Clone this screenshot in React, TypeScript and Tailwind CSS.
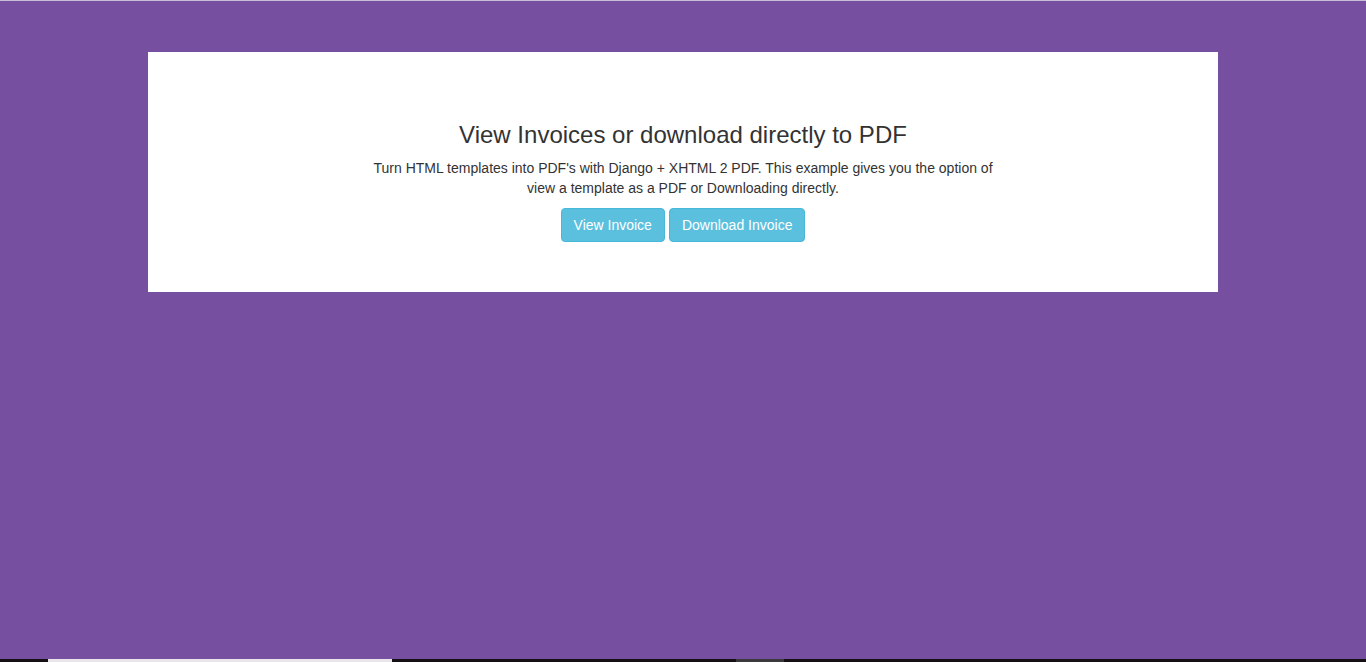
const App = () => {
  return (
    <div className="relative h-[662px] w-full overflow-hidden bg-[#774fa0] font-['Liberation_Sans',Arial,sans-serif] text-[#333]">
      <div className="h-px w-full bg-[#c9bcd9]" />

      <div className="mx-[148px] mt-[51px] bg-white pt-[68px] pb-[50px] text-center">
        <h1 className="text-[24px] leading-[30px] text-[#333]">View Invoices or download directly to PDF</h1>
        <p className="mx-auto mt-[8px] w-[630px] text-[14px] leading-[20px]">
          Turn HTML templates into PDF's with Django + XHTML 2 PDF. This example gives you the option of view a template as a PDF or Downloading directly.
        </p>
        <div className="mt-[10px] flex justify-center gap-[4px]">
          <button className="h-[34px] rounded-[4px] border border-[#46b8da] bg-[#5bc0de] px-[12px] text-[14px] text-white">
            View Invoice
          </button>
          <button className="h-[34px] rounded-[4px] border border-[#46b8da] bg-[#5bc0de] px-[12px] text-[14px] text-white">
            Download Invoice
          </button>
        </div>
      </div>

      {/* taskbar edge peeking in at the bottom */}
      <div className="absolute bottom-0 left-0 flex h-[3px] w-full bg-[#141014]">
        <div className="ml-[48px] w-[344px] bg-[#e8e6ea]" />
        <div className="ml-[344px] w-[48px] bg-[#3a3a3c]" />
      </div>
    </div>
  );
};

export default App;
